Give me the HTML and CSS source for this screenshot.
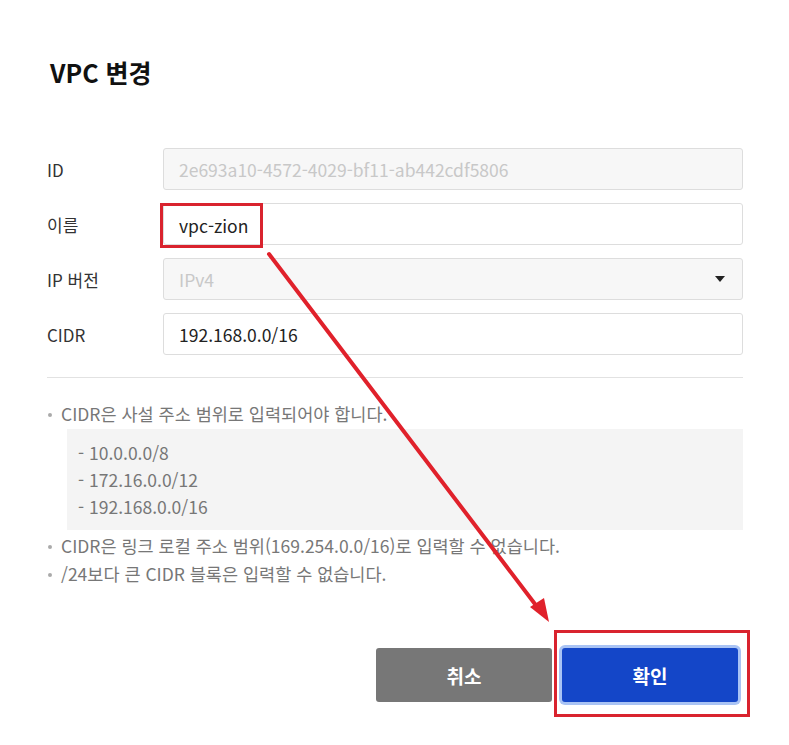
FILE: index.html
```html
<!DOCTYPE html>
<html lang="ko">
<head>
    <meta charset="UTF-8">
    <meta name="viewport" content="width=device-width, initial-scale=1.0">
    <title>VPC 변경</title>
    <link rel="stylesheet" href="styles.css">
</head>
<body>
    <div class="dialog">
        <h1 class="title">VPC 변경</h1>

        <div class="form">
            <div class="row">
                <label class="label">ID</label>
                <div class="field disabled">2e693a10-4572-4029-bf11-ab442cdf5806</div>
            </div>
            <div class="row">
                <label class="label">이름</label>
                <div class="field">
                    <span class="mark">vpc-zion</span>
                </div>
            </div>
            <div class="row">
                <label class="label">IP 버전</label>
                <div class="field disabled select">
                    <span>IPv4</span>
                    <span class="caret"></span>
                </div>
            </div>
            <div class="row">
                <label class="label">CIDR</label>
                <div class="field">192.168.0.0/16</div>
            </div>
        </div>

        <hr class="divider">

        <ul class="hints">
            <li>CIDR은 사설 주소 범위로 입력되어야 합니다.</li>
            <li class="ranges">
                <div>- 10.0.0.0/8</div>
                <div>- 172.16.0.0/12</div>
                <div>- 192.168.0.0/16</div>
            </li>
            <li>CIDR은 링크 로컬 주소 범위(169.254.0.0/16)로 입력할 수 없습니다.</li>
            <li>/24보다 큰 CIDR 블록은 입력할 수 없습니다.</li>
        </ul>

        <div class="actions">
            <button class="btn cancel">취소</button>
            <div class="ok-mark">
                <button class="btn ok">확인</button>
            </div>
        </div>
    </div>

    <svg class="arrow" width="789" height="745" viewBox="0 0 789 745">
        <line x1="269" y1="254" x2="538" y2="608" stroke="#e0212b" stroke-width="4" stroke-linecap="round"/>
        <polygon points="549,622 530,607 544,598" fill="#e0212b"/>
    </svg>
</body>
</html>
```

FILE: styles.css
```css
body {
    font-family: 'Noto Sans CJK KR', 'Noto Sans', sans-serif;
    background-color: #fff;
    color: #222;
    margin: 0;
    padding: 0;
}
.dialog {
    width: 696px;
    padding: 52px 0 0 47px;
}
.title {
    font-size: 25px;
    font-weight: 700;
    color: #111;
    margin: 0 0 0 3px;
    line-height: 40px;
}
.form {
    margin-top: 56px;
    display: flex;
    flex-direction: column;
    gap: 13px;
}
.row {
    display: flex;
    align-items: center;
}
.label {
    width: 116px;
    font-size: 17px;
    color: #333;
}
.field {
    flex: 1;
    height: 42px;
    box-sizing: border-box;
    border: 1px solid #ddd;
    border-radius: 3px;
    padding: 0 15px;
    display: flex;
    align-items: center;
    font-size: 17.5px;
    color: #222;
    position: relative;
}
.field.disabled {
    background-color: #f7f7f7;
    color: #c8c8c8;
}
.select {
    justify-content: space-between;
}
.caret {
    width: 0;
    height: 0;
    border-left: 5px solid transparent;
    border-right: 5px solid transparent;
    border-top: 6px solid #222;
    margin-right: 2px;
}
.mark {
    position: absolute;
    left: -4px;
    top: -1px;
    width: 103px;
    height: 45px;
    box-sizing: border-box;
    border: 3px solid #d9232e;
    display: flex;
    align-items: center;
    padding-left: 16px;
}
.divider {
    border: none;
    border-top: 1px solid #e2e2e2;
    margin: 22px 0 0 0;
}
.hints {
    list-style: none;
    margin: 22px 0 0 0;
    padding: 0;
    font-size: 17.5px;
    color: #777;
}
.hints li {
    position: relative;
    padding-left: 14px;
    line-height: 28px;
}
.hints li::before {
    content: '';
    position: absolute;
    left: 1px;
    top: 13px;
    width: 4px;
    height: 4px;
    border-radius: 50%;
    background-color: #aaa;
}
.hints li.ranges {
    margin: 1px 0 2px 20px;
    padding: 10px 11px 10px 11px;
    background-color: #f4f4f4;
    line-height: 27px;
}
.hints li.ranges::before {
    content: none;
}
.actions {
    display: flex;
    justify-content: flex-end;
    align-items: flex-end;
    gap: 2px;
    margin-top: 42px;
    padding-right: 5px;
}
.btn {
    width: 176px;
    height: 54px;
    border: none;
    border-radius: 3px;
    font-family: inherit;
    font-size: 19px;
    font-weight: 700;
    color: #fff;
}
.cancel {
    background-color: #777;
    margin-bottom: 15px;
}
.ok-mark {
    border: 3px solid #d9232e;
    padding: 15px 9px 12px 5px;
    margin-right: -12px;
}
.ok {
    background-color: #1446c8;
    box-shadow: 0 0 0 3px #a9c3f4;
}
.arrow {
    position: absolute;
    top: 0;
    left: 0;
    pointer-events: none;
}
```
